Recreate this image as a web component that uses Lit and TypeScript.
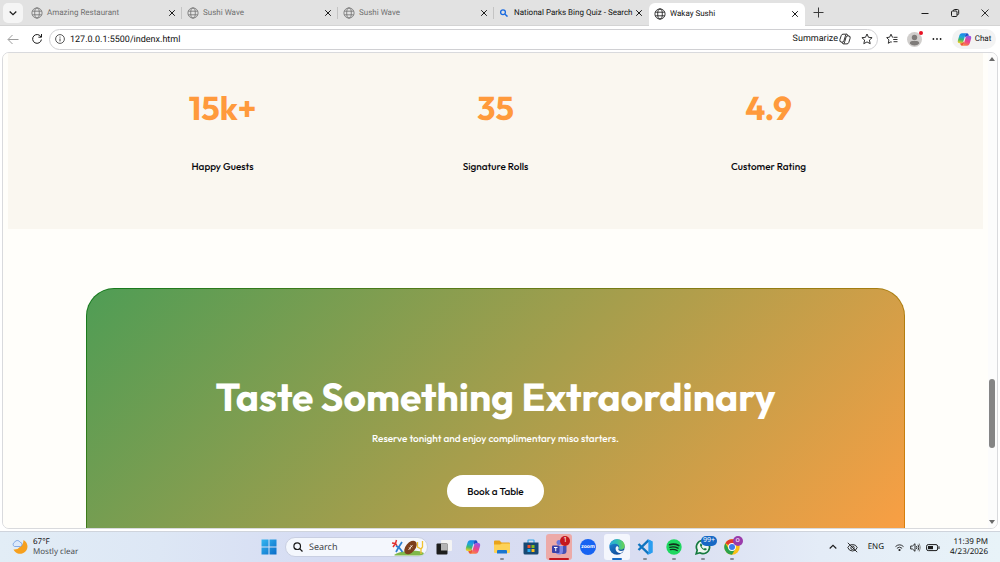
import { LitElement, html, css, svg, nothing } from "lit";
import { customElement } from "lit/decorators.js";
import { classMap } from "lit/directives/class-map.js";

const globe = html`<svg class="globe" viewBox="0 0 12 12" aria-hidden="true">
  <g fill="none" stroke="currentColor" stroke-width="0.8">
    <circle cx="6" cy="6" r="5.1" />
    <ellipse cx="6" cy="6" rx="2.3" ry="5.1" />
    <path d="M1.300 4.200h9.400M1.300 7.800h9.400" />
  </g>
</svg>`;

const cross = html`<svg class="cross" viewBox="0 0 8 8" aria-hidden="true">
  <path d="M1.200 1.200l5.600 5.600M6.800 1.200l-5.600 5.600" fill="none" stroke="currentColor" stroke-width="1" />
</svg>`;

const copilot = (id: string) => html`<svg class="copilot" viewBox="0 0 16 16" aria-hidden="true">
  <defs>
    <linearGradient id="${id}a" x1="0.5" y1="0" x2="0.3" y2="1">
      <stop offset="0" stop-color="#1a86ea" />
      <stop offset="0.350" stop-color="#1fa5dc" />
      <stop offset="0.650" stop-color="#3fb86b" />
      <stop offset="1" stop-color="#f5cf22" />
    </linearGradient>
    <linearGradient id="${id}b" x1="0.6" y1="0" x2="0.2" y2="1">
      <stop offset="0" stop-color="#9a55e6" />
      <stop offset="0.5" stop-color="#ee4388" />
      <stop offset="1" stop-color="#fb8a3c" />
    </linearGradient>
  </defs>
  <path d="M10.800 1.300H5.300C3.700 1.300 2.900 2.500 2.400 4L1 8.700C0.400 10.700 1 12 2.900 12H4.600C5.800 12 6.400 11.200 6.700 10.200L8.700 3.700C9 2.500 9.600 1.600 10.800 1.300Z" fill="url(#${id}a)" />
  <path d="M5.200 14.700H10.700C12.300 14.700 13.100 13.500 13.600 12L15 7.300C15.600 5.300 15 4 13.100 4H11.400C10.200 4 9.600 4.800 9.300 5.800L7.300 12.300C7 13.500 6.400 14.400 5.200 14.700Z" fill="url(#${id}b)" />
  <path d="M8.500 4.300C8.900 2.600 9.600 1.300 10.600 1.300C12 1.300 12.300 2.600 12.700 4H11.400C10.200 4 9.600 4.800 9.300 5.800Z" fill="#1b50c9" />
  <path d="M7.500 11.700C7.100 13.400 6.400 14.700 5.400 14.700C4 14.700 3.700 13.400 3.300 12H4.600C5.800 12 6.400 11.200 6.700 10.200Z" fill="#ef5a33" />
</svg>`;

const windowsLogo = html`<svg class="logo" viewBox="0 0 16 16" aria-hidden="true">
  <defs><linearGradient id="win" x1="0" y1="0" x2="1" y2="1"><stop offset="0" stop-color="#35b6f0" /><stop offset="1" stop-color="#0a6cc8" /></linearGradient></defs>
  <path fill="url(#win)" d="M0.500 0.500h7v7h-7zM8.500 0.500h7v7h-7zM0.500 8.500h7v7h-7zM8.500 8.500h7v7h-7z" />
</svg>`;

const taskView = html`<svg class="logo" viewBox="0 0 16 16" aria-hidden="true">
  <rect x="5" y="1" width="11" height="11" rx="1" fill="#f4f4f4" />
  <rect x="0.500" y="4.500" width="11" height="11" rx="1" fill="#1d1d1d" />
  <rect x="5" y="4.500" width="6.500" height="7" fill="#b4b4b4" />
</svg>`;

const explorer = html`<svg class="logo" viewBox="0 0 16 16" aria-hidden="true">
  <path d="M0 2.500Q0 1.500 1 1.500H5.500L7.500 3.500H15Q16 3.500 16 4.500V8H0Z" fill="#e8a31a" />
  <path d="M0 5.500H6L8 4.500H16V13Q16 14 15 14H1Q0 14 0 13Z" fill="#fdd256" />
  <path d="M3 14.500V12Q3 11 4 11H12Q13 11 13 12V14.500Z" fill="#1a75cf" />
</svg>`;

const store = html`<svg class="logo" viewBox="0 0 16 16" aria-hidden="true">
  <path d="M5 4V1.500Q5 1 5.500 1H10.500Q11 1 11 1.500V4" fill="none" stroke="#35a8e8" stroke-width="1.200" />
  <path d="M0.500 3.500H15.500V14Q15.500 15.500 14 15.500H2Q0.500 15.500 0.500 14Z" fill="#174873" />
  <path fill="#f2502b" d="M4.500 6h3v3h-3z" /><path fill="#86bc1e" d="M8.500 6h3v3h-3z" />
  <path fill="#2aaaf0" d="M4.500 10h3v3h-3z" /><path fill="#fdbd1a" d="M8.500 10h3v3h-3z" />
</svg>`;

const teams = html`<svg class="logo" viewBox="0 0 16 16" aria-hidden="true">
  <circle cx="8" cy="3.500" r="2.500" fill="#6b76dd" />
  <circle cx="13" cy="4.500" r="1.800" fill="#6b76dd" />
  <path d="M10 7H15.500V12Q15.500 15 12.500 15H10Z" fill="#4650b4" />
  <path d="M4.500 7H12V12Q12 15.500 8.200 15.500Q4.500 15.500 4.500 12Z" fill="#7c86e4" />
  <rect x="1" y="6.500" width="7.500" height="7.500" rx="1" fill="#3940a8" />
  <path d="M3 8.500H6.500M4.750 8.500V12.200" stroke="#fff" stroke-width="1" />
</svg>`;

const zoomLogo = html`<span class="zoom">zoom</span>`;

const edge = html`<svg class="logo" viewBox="0 0 16 16" aria-hidden="true">
  <defs>
    <linearGradient id="ea" x1="0" y1="0.300" x2="1" y2="0.300"><stop offset="0" stop-color="#2aa7e0" /><stop offset="0.500" stop-color="#2fc0b0" /><stop offset="1" stop-color="#6ed54e" /></linearGradient>
    <linearGradient id="eb" x1="0" y1="0" x2="0.600" y2="1"><stop offset="0" stop-color="#1f8fdc" /><stop offset="1" stop-color="#114a9a" /></linearGradient>
  </defs>
  <circle cx="8" cy="8" r="7.700" fill="url(#eb)" />
  <path d="M0.400 7.500C0.800 3.300 4.200 0.300 8.200 0.300C12.500 0.300 15.700 3.400 15.700 6.900C15.700 9.200 13.900 10.800 11.800 10.800C10.300 10.800 9.300 10.200 9.600 9.600C10 9.100 10.200 8.600 10.200 8C10.200 6.300 8.400 4.800 6 4.800C3.400 4.800 1.200 5.800 0.400 7.500Z" fill="url(#ea)" />
  <path d="M9.400 9.900C9 10.600 9.900 12 12 12C13.300 12 14.200 11.600 15 11.100C14.300 12.400 13.200 13.500 11.800 14.200C8.500 14.300 6.600 12 6.600 9.800C6.600 8.600 7.200 7.600 8.100 7.100C9 7.400 10.300 8.600 9.400 9.900Z" fill="#f3f7fc" />
</svg>`;

const vscode = html`<svg class="logo" viewBox="0 0 16 16" aria-hidden="true">
  <path d="M11.500 0.500L15.500 2.400V13.600L11.500 15.500Z" fill="#2a9df0" />
  <path d="M1.500 5L11.700 14.800M1.500 11L11.700 1.200" stroke="#0f74c0" stroke-width="2.400" fill="none" />
  <path d="M11.500 0.500L15.500 2.400V13.600L11.500 15.500L10.600 14.600L11.700 13.500V2.500L10.600 1.400Z" fill="#2a9df0" />
</svg>`;

const spotify = html`<svg class="logo" viewBox="0 0 16 16" aria-hidden="true">
  <circle cx="8" cy="8" r="7.700" fill="#1ed760" />
  <g fill="none" stroke="#11301c" stroke-linecap="round">
    <path d="M3.500 5.700Q8.500 4.200 12.800 6.500" stroke-width="1.700" />
    <path d="M3.900 8.300Q8.200 7.100 12 9.200" stroke-width="1.400" />
    <path d="M4.300 10.700Q8 9.800 11.200 11.600" stroke-width="1.200" />
  </g>
</svg>`;

const whatsapp = html`<svg class="logo" viewBox="0 0 16 16" aria-hidden="true">
  <path d="M1.200 14.800L2.200 11.200A6.600 6.600 0 1 1 4.800 13.800Z" fill="#eef7f0" stroke="#157a3f" stroke-width="1.700" />
  <path d="M5.600 4.600C4.600 5.500 4.900 7.200 6.700 9.200C8.600 11.200 10.500 11.900 11.500 10.700L11.700 9.800L9.900 8.900L9 9.700C8 9.300 7 8.300 6.600 7.400L7.200 6.600L6.500 4.700Z" fill="#157a3f" />
</svg>`;

const chrome = html`<svg class="logo" viewBox="0 0 16 16" aria-hidden="true">
  <circle cx="8" cy="8" r="7.700" fill="#fbc116" />
  <path d="M8 8L1.330 4.150A7.700 7.700 0 0 1 14.670 4.150H8Z" fill="#e33b2e" />
  <path d="M1.330 4.150A7.700 7.700 0 0 0 8 15.700L11.300 9.900L8 8L4.700 9.900Z" fill="#2ba24c" />
  <circle cx="8" cy="8" r="3.900" fill="#fff" /><circle cx="8" cy="8" r="3" fill="#3b7ded" />
</svg>`;

const stats = [
  { value: "15k+", label: "Happy Guests" },
  { value: "35", label: "Signature Rolls" },
  { value: "4.9", label: "Customer Rating" },
];

const tabs = [
  { title: "Amazing Restaurant", kind: "idle" },
  { title: "Sushi Wave", kind: "idle" },
  { title: "Sushi Wave", kind: "idle" },
  { title: "National Parks Bing Quiz - Search", kind: "search" },
  { title: "Wakay Sushi", kind: "active" },
];

const apps = [
  { name: "Task View", icon: taskView },
  { name: "Copilot", icon: copilot("t") },
  { name: "File Explorer", icon: explorer, run: true },
  { name: "Microsoft Store", icon: store },
  { name: "Teams", icon: teams, alert: true, badge: "1", tone: "red" },
  { name: "Zoom", icon: zoomLogo },
  { name: "Edge", icon: edge, current: true },
  { name: "Visual Studio Code", icon: vscode, run: true },
  { name: "Spotify", icon: spotify, run: true },
  { name: "WhatsApp", icon: whatsapp, run: true, badge: "99+", tone: "blue" },
  { name: "Chrome", icon: chrome, run: true, badge: "o", tone: "purple" },
];

const base = css`
  :host { text-rendering: geometricPrecision; }
  * { box-sizing: border-box; }
  button, input { text-rendering: inherit; }
  button { font: inherit; color: inherit; background: none; border: 0; padding: 0; margin: 0; display: flex; align-items: center; justify-content: center; white-space: nowrap; }
  svg { display: block; flex: none; }
`;

@customElement("browser-chrome")
export class BrowserChrome extends LitElement {
  static styles = [base, css`
    :host { display: block; font-family: Roboto, "Noto Sans", sans-serif; font-size: 8px; line-height: 12px; color: #111; }
    .tabs { display: flex; height: 26px; background: #e2e2e2; padding-left: 3px; border-bottom: 1px solid #d4d4d4; }
    .menu { flex: none; width: 20px; height: 20px; margin: 3px 3px 0 0; border-radius: 5px; background: #f5f5f5; }
    .menu svg { width: 8px; height: 8px; }
    .tab { flex: 0 1 156px; min-width: 0; display: flex; align-items: center; padding: 0 5px; gap: 4px; color: #707070; position: relative; }
    .tab.idle::after { content: ""; position: absolute; right: 0; top: 7px; width: 1px; height: 12px; background: #c4c4c4; }
    .tab.search { color: #111; flex-basis: 155px; padding-left: 4px; }
    .tab.active { color: #111; background: #fff; border-radius: 6px 6px 0 0; margin-top: 3px; padding-bottom: 3px; height: 24px; }
    .title { flex: 1; min-width: 0; justify-content: flex-start; }
    .globe { width: 12px; height: 12px; }
    .glass { width: 12px; height: 8px; }
    .close { width: 10px; height: 12px; color: #1b1b1b; }
    .cross { width: 8px; height: 8px; }
    .new { width: 26px; }
    .new svg { width: 11px; height: 11px; }
    .win { margin-left: auto; display: flex; padding-right: 10px; gap: 20px; }
    .win svg { width: 10px; height: 10px; }
    .bar { display: flex; align-items: center; height: 26px; background: #fff; padding: 0 4px 0 7px; }
    .back { width: 12px; color: #9b9b9b; margin-right: 11px; }
    .reload { width: 13px; margin-right: 6px; }
    .bar .back svg, .bar .reload svg { width: 12px; height: 12px; }
    .address { flex: 1; display: flex; align-items: center; height: 21px; border: 1px solid #d0d0d3; border-radius: 11px; padding: 0 4px 0 5px; gap: 5px; }
    .address input { flex: 1; min-width: 0; border: 0; outline: 0; padding: 1px 0 0; background: none; font: inherit; font-size: 9px; color: #111; }
    .info { width: 10px; height: 10px; }
    .sum { font-size: 9px; gap: 1px; margin-right: 5px; }
    .ic { width: 12px; height: 12px; }
    .tools { display: flex; align-items: center; gap: 9px; padding-left: 8px; }
    .me { position: relative; }
    .me svg { width: 15px; height: 15px; }
    .dot { position: absolute; right: -1px; top: -1px; width: 4px; height: 4px; border-radius: 50%; background: #e81123; }
    .chat { height: 20px; width: 44px; border-radius: 10px; background: #f3f3f3; gap: 3px; }
    .chat .copilot { width: 15px; height: 15px; }
  `];

  render() {
    return html`
      <div class="tabs">
        <button class="menu" aria-label="Tab actions"><svg viewBox="0 0 8 8"><path d="M0.700 2.500L4 5.700L7.300 2.500" fill="none" stroke="#1b1b1b" stroke-width="1.200" /></svg></button>
        ${tabs.map((t) => html`
          <div class=${classMap({ tab: true, [t.kind]: true })}>
            ${t.kind === "search"
              ? html`<svg class="glass" viewBox="0 0 12 8" aria-hidden="true"><circle cx="5" cy="3.200" r="2.400" fill="none" stroke="#1769e0" stroke-width="1.300" /><path d="M6.800 5L9.500 7.600" stroke="#1769e0" stroke-width="1.400" /></svg>`
              : globe}
            <button class="title">${t.title}</button>
            <button class="close" aria-label="Close tab">${cross}</button>
          </div>`)}
        <button class="new" aria-label="New tab"><svg viewBox="0 0 11 11"><path d="M5.500 0.500V10.500M0.500 5.500H10.500" stroke="#3a3a3a" stroke-width="1" /></svg></button>
        <div class="win">
          <button aria-label="Minimize"><svg viewBox="0 0 10 10"><path d="M1.500 5.500H8.500" stroke="#1b1b1b" /></svg></button>
          <button aria-label="Restore"><svg viewBox="0 0 10 10"><g fill="none" stroke="#1b1b1b"><rect x="1.500" y="3" width="5.500" height="5.500" rx="1" /><path d="M3.500 3V2.500Q3.500 1.500 4.500 1.500H7.500Q8.700 1.500 8.700 2.700V5.500Q8.700 6.700 7.500 6.700H7" /></g></svg></button>
          <button aria-label="Close"><svg viewBox="0 0 10 10"><path d="M1.500 1.500L8.500 8.500M8.500 1.500L1.500 8.500" stroke="#1b1b1b" stroke-width="0.900" /></svg></button>
        </div>
      </div>
      <div class="bar">
        <button class="back" aria-label="Back"><svg viewBox="0 0 12 12"><path d="M11.500 6.500H1.300M5.500 2L1 6.500L5.500 11" fill="none" stroke="currentColor" /></svg></button>
        <button class="reload" aria-label="Refresh"><svg viewBox="0 0 12 12"><path d="M10 4A4.400 4.400 0 1 0 10.400 6.500M10.500 1V4.200H7.400" fill="none" stroke="#1b1b1b" stroke-width="1" /></svg></button>
        <div class="address">
          <svg class="info" viewBox="0 0 10 10" aria-hidden="true"><circle cx="5" cy="5" r="4.400" fill="none" stroke="#444" stroke-width="0.900" /><path d="M5 4.500V7.400M5 2.600V3.600" stroke="#444" /></svg>
          <input type="text" aria-label="Address" value="127.0.0.1:5500/indenx.html" />
          <button class="sum">Summarize<svg class="ic" viewBox="0 0 12 12"><g fill="none" stroke="#1b1b1b" stroke-width="0.900"><path d="M7.500 1.200H4Q2.700 1.200 2.200 2.700L0.900 6.700Q0.300 9 2.300 9H3.700Q4.600 9 4.900 7.900L6.300 3.300Q6.700 1.500 7.500 1.200Q8.700 1.200 9.100 3" /><path d="M4.500 10.900H8Q9.300 10.900 9.800 9.400L11.100 5.300Q11.700 3 9.700 3H8.300Q7.400 3 7.100 4.100L5.700 8.700Q5.300 10.600 4.500 10.900Q3.300 10.900 2.900 9" /></g></svg></button>
          <button aria-label="Add to favorites"><svg class="ic" viewBox="0 0 12 12"><path d="M6 1L7.500 4.300L11.100 4.700L8.400 7.100L9.200 10.700L6 8.900L2.800 10.700L3.600 7.100L0.900 4.700L4.500 4.300Z" fill="none" stroke="#1b1b1b" stroke-width="0.900" stroke-linejoin="round" /></svg></button>
        </div>
        <div class="tools">
          <button aria-label="Favorites"><svg class="ic" viewBox="0 0 12 12"><path d="M7 4.200H6.400L5 1.200L3.600 4.200L0.700 4.600L2.900 6.900L2.300 10.300L5 8.700L5.800 9.200M7.500 4.300H11.500M7.200 6.500H11.500M7.500 8.700H11.500" fill="none" stroke="#1b1b1b" stroke-width="0.900" stroke-linejoin="round" /></svg></button>
          <button class="me" aria-label="Profile"><svg viewBox="0 0 15 15"><circle cx="7.500" cy="7.500" r="7.500" fill="#d0cecc" /><circle cx="7.500" cy="5.500" r="2.700" fill="#7f7c7a" /><path d="M2.800 11.500Q2.800 9 5.300 9H9.700Q12.200 9 12.200 11.500Q10.500 13.600 7.500 13.600Q4.500 13.600 2.800 11.500Z" fill="#7f7c7a" /></svg><span class="dot"></span></button>
          <button aria-label="Settings and more"><svg class="ic" viewBox="0 0 12 12"><g fill="#1b1b1b"><circle cx="2.400" cy="6" r="0.900" /><circle cx="6" cy="6" r="0.900" /><circle cx="9.600" cy="6" r="0.900" /></g></svg></button>
          <button class="chat">${copilot("c")}Chat</button>
        </div>
      </div>`;
  }
}

@customElement("sushi-page")
export class SushiPage extends LitElement {
  static styles = [base, css`
    :host { display: block; overflow: hidden; background: #fffefa; font-family: Outfit, Lato, sans-serif; color: #1c1c22; padding: 0 5px; }
    .stats { background: #faf7f0; padding: 35px 8% 54px; display: grid; grid-template-columns: repeat(3, 1fr); text-align: center; }
    .stat { display: flex; flex-direction: column; gap: 31px; }
    .value { margin: 0; font-size: 33px; line-height: 40px; font-weight: 700; color: #ff9a3c; }
    .label { margin: 0; font-size: 10px; line-height: 16px; font-weight: 500; color: #08080c; }
    .cta { margin: 59px 8% 0; padding: 84px 20px 60px; border: 1px solid transparent; border-radius: 28px; text-align: center; color: #fff;
      background: linear-gradient(135deg, #4f9d55, #ff9f43) padding-box, linear-gradient(135deg, #137a1e, #e07f0c) border-box;
      display: flex; flex-direction: column; align-items: center; }
    h2 { margin: 0; font-size: 39px; line-height: 50px; font-weight: 700; }
    p.lead { margin: 8px 0 28px; font-size: 10px; line-height: 16px; font-weight: 500; }
    .book { background: #fff; color: #08080c; border-radius: 16px; height: 32px; padding: 0 20px; font-size: 10px; font-weight: 500; }
  `];

  render() {
    return html`
      <section class="stats">
        ${stats.map((s) => html`<div class="stat"><p class="value">${s.value}</p><p class="label">${s.label}</p></div>`)}
      </section>
      <section class="cta">
        <h2>Taste Something Extraordinary</h2>
        <p class="lead">Reserve tonight and enjoy complimentary miso starters.</p>
        <button class="book">Book a Table</button>
      </section>`;
  }
}

@customElement("task-bar")
export class TaskBar extends LitElement {
  static styles = [base, css`
    :host { display: grid; grid-template-columns: 1fr auto 1fr; align-items: center; height: 31px; padding: 0 12px 0 12px; border-top: 1px solid #cfd4dc;
      background: linear-gradient(90deg, #e2edf6 0%, #dde7f5 16%, #d6dcf3 32%, #d9ddf1 65%, #e4ecf7 82%, #e8f3f8 100%);
      font-family: "Noto Sans", sans-serif; font-size: 8px; line-height: 10px; color: #111; }
    .weather { justify-self: start; gap: 5px; text-align: left; }
    .weather svg { width: 16px; height: 16px; }
    .weather span { display: block; }
    .cond { color: #4a4d53; }
    .mid { display: flex; align-items: center; margin-left: 7px; }
    .logo { width: 16px; height: 16px; }
    .search { display: flex; align-items: center; width: 143px; height: 20px; margin: 0 2px 0 8px; padding: 0 2px 0 7px; gap: 6px; border-radius: 10px; background: #f4f7fd; border: 1px solid #c9cfe2; }
    .search input { flex: 1; min-width: 0; border: 0; outline: 0; padding: 0; background: none; font: inherit; font-size: 9px; }
    .search input::placeholder { color: #404349; opacity: 1; }
    .glass { width: 10px; height: 10px; }
    .art { width: 34px; height: 18px; }
    .apps { display: grid; grid-template-columns: repeat(11, 1fr); width: 316px; justify-items: center; }
    .app { position: relative; width: 26px; height: 26px; border-radius: 3px; }
    .app::after { content: ""; position: absolute; left: 11px; bottom: 0; width: 4px; height: 2px; border-radius: 1px; }
    .run::after { background: #868b96; }
    .alert { background: #ecaaa8; }
    .alert::after { left: 3px; width: 20px; background: #c4161c; }
    .current { background: #f4f6fd; }
    .current::after { left: 8px; width: 10px; background: #1668c4; }
    .copilot { width: 16px; height: 16px; }
    .zoom { width: 16px; height: 16px; border-radius: 8px; background: #1763f2; color: #fff; font-size: 5px; font-weight: 700; line-height: 16px; }
    .badge { position: absolute; left: 14px; top: 2px; min-width: 10px; height: 10px; padding: 0 2px; border-radius: 5px; color: #fff; font-size: 7px; line-height: 10px; }
    .red { background: #c4161c; }
    .blue { left: 11px; background: #1668c4; }
    .purple { background: #9a3bab; }
    .tray { justify-self: end; display: flex; align-items: center; gap: 10px; }
    .group { gap: 5px; }
    .up { width: 8px; height: 8px; }
    .t { width: 11px; height: 11px; }
    .bat { width: 14px; height: 11px; }
    .clock { text-align: right; }
    .clock span { display: block; }
  `];

  render() {
    return html`
      <button class="weather">
        <svg viewBox="0 0 16 16" aria-hidden="true"><path d="M11.500 1A7.300 7.300 0 1 1 1.500 10.500A8 8 0 0 0 8.500 7.500Q11.500 5 11.500 1Z" fill="#f6a01e" /><path d="M2.500 7.500A2.200 2.200 0 0 1 2.500 3.400A3 3 0 0 1 8 3.200A2.200 2.200 0 0 1 8.400 7.500Z" fill="#dce9fb" stroke="#6f9be0" stroke-width="0.800" /></svg>
        <div><span>67°F</span><span class="cond">Mostly clear</span></div>
      </button>
      <div class="mid">
        <button aria-label="Start">${windowsLogo}</button>
        <label class="search">
          <svg class="glass" viewBox="0 0 10 10" aria-hidden="true"><circle cx="4.200" cy="4.200" r="3.300" fill="none" stroke="#1b1b1b" stroke-width="1.200" /><path d="M6.600 6.600L9.500 9.500" stroke="#1b1b1b" stroke-width="1.300" /></svg>
          <input type="search" placeholder="Search" aria-label="Search" />
          <svg class="art" viewBox="0 0 34 18" aria-hidden="true">
            <path d="M3 17Q10 12 18 14Q26 11 33 15Q32 17.500 28 17.500H4Z" fill="#7fb84a" />
            <path d="M1 5L4.500 5.500L6 8M5.500 2L4.500 5.500L2 9" fill="none" stroke="#e0302e" stroke-width="1.500" />
            <path d="M11 4L7.500 9.500L5 14M5 8L8 9.500L11.500 14" fill="none" stroke="#2b7fd2" stroke-width="1.700" />
            <ellipse cx="19.500" cy="9.500" rx="7.800" ry="4.800" transform="rotate(-50 19.500 9.500)" fill="#7d3f1d" />
            <path d="M17.500 12L21.500 7M17.800 9.500L19.800 11M19.300 7.600L21.300 9.200" stroke="#f4e9df" stroke-width="0.900" />
            <path d="M26.500 4V9L30 11V16M30 11L31.500 9V3" fill="none" stroke="#f1c232" stroke-width="1.300" />
          </svg>
        </label>
        <div class="apps">
          ${apps.map((a) => html`
            <button class=${classMap({ app: true, run: !!a.run, alert: !!a.alert, current: !!a.current })} aria-label=${a.name}>
              ${a.icon}${a.badge ? html`<span class=${classMap({ badge: true, [a.tone as string]: true })}>${a.badge}</span>` : nothing}
            </button>`)}
        </div>
      </div>
      <div class="tray">
        <button aria-label="Show hidden icons"><svg class="up" viewBox="0 0 8 8"><path d="M0.700 5.500L4 2.300L7.300 5.500" fill="none" stroke="#1b1b1b" stroke-width="1.100" /></svg></button>
        <button aria-label="Privacy"><svg class="t" viewBox="0 0 11 11"><g fill="none" stroke="#1b1b1b" stroke-width="0.900"><path d="M0.800 5.500Q2 2.500 5.500 2.500Q9 2.500 10.200 5.500Q9 9 5.500 9Q2 9 0.800 5.500Z" /><circle cx="5.500" cy="5.800" r="1.700" /><path d="M0.800 0.800L10.200 10.200" /></g></svg></button>
        <button>ENG</button>
        <button class="group" aria-label="Network, volume and battery">
          <svg class="t" viewBox="0 0 11 11"><g fill="none" stroke="#1b1b1b" stroke-width="0.900"><path d="M1.500 4.600Q5.500 1 9.500 4.600M2.900 6.300Q5.500 4 8.100 6.300" /></g><circle cx="5.500" cy="8" r="1.100" fill="#1b1b1b" /></svg>
          <svg class="t" viewBox="0 0 11 11"><g fill="none" stroke="#1b1b1b" stroke-width="0.900"><path d="M0.700 4V7H2.500L5 9.300V1.700L2.500 4Z" /><path d="M6.500 4Q7.300 5.500 6.500 7M8 2.700Q9.600 5.500 8 8.300" /><path d="M9.200 1.500Q11.500 5.500 9.200 9.500" stroke="#777" /></g></svg>
          <svg class="bat" viewBox="0 0 14 11"><rect x="0.600" y="2.600" width="11" height="6" rx="1.600" fill="none" stroke="#1b1b1b" stroke-width="1" /><rect x="2" y="4" width="5" height="3.200" fill="#1b1b1b" /><path d="M13 4.300V7" stroke="#1b1b1b" /></svg>
        </button>
        <button class="clock"><div><span>11:39 PM</span><span>4/23/2026</span></div></button>
      </div>`;
  }
}

@customElement("app-root")
export class AppRoot extends LitElement {
  static styles = [base, css`
    :host { display: flex; flex-direction: column; height: 100vh; background: #fff; overflow: hidden; }
    .frame { flex: 1; min-height: 0; display: flex; margin: 0 2px 2px; border: 1px solid #d9dadd; border-radius: 7px; overflow: hidden; background: #fffefa; }
    sushi-page { flex: 1; min-width: 0; }
    .scroll { width: 9px; display: flex; flex-direction: column; align-items: center; padding: 4px 1px 4px 0; background: #fcfcfc; }
    .arrow { width: 6px; height: 4px; }
    .before { flex: 315; }
    .thumb { flex: 69; width: 6px; border-radius: 3px; background: #858585; }
    .after { flex: 71; }
  `];

  render() {
    return html`
      <browser-chrome></browser-chrome>
      <main class="frame">
        <sushi-page></sushi-page>
        <div class="scroll" aria-hidden="true">
          <svg class="arrow" viewBox="0 0 6 4">${svg`<path d="M0 4L3 0L6 4Z" fill="#6b6b6b" />`}</svg>
          <div class="before"></div><div class="thumb"></div><div class="after"></div>
          <svg class="arrow" viewBox="0 0 6 4">${svg`<path d="M0 0L3 4L6 0Z" fill="#6b6b6b" />`}</svg>
        </div>
      </main>
      <task-bar></task-bar>`;
  }
}
